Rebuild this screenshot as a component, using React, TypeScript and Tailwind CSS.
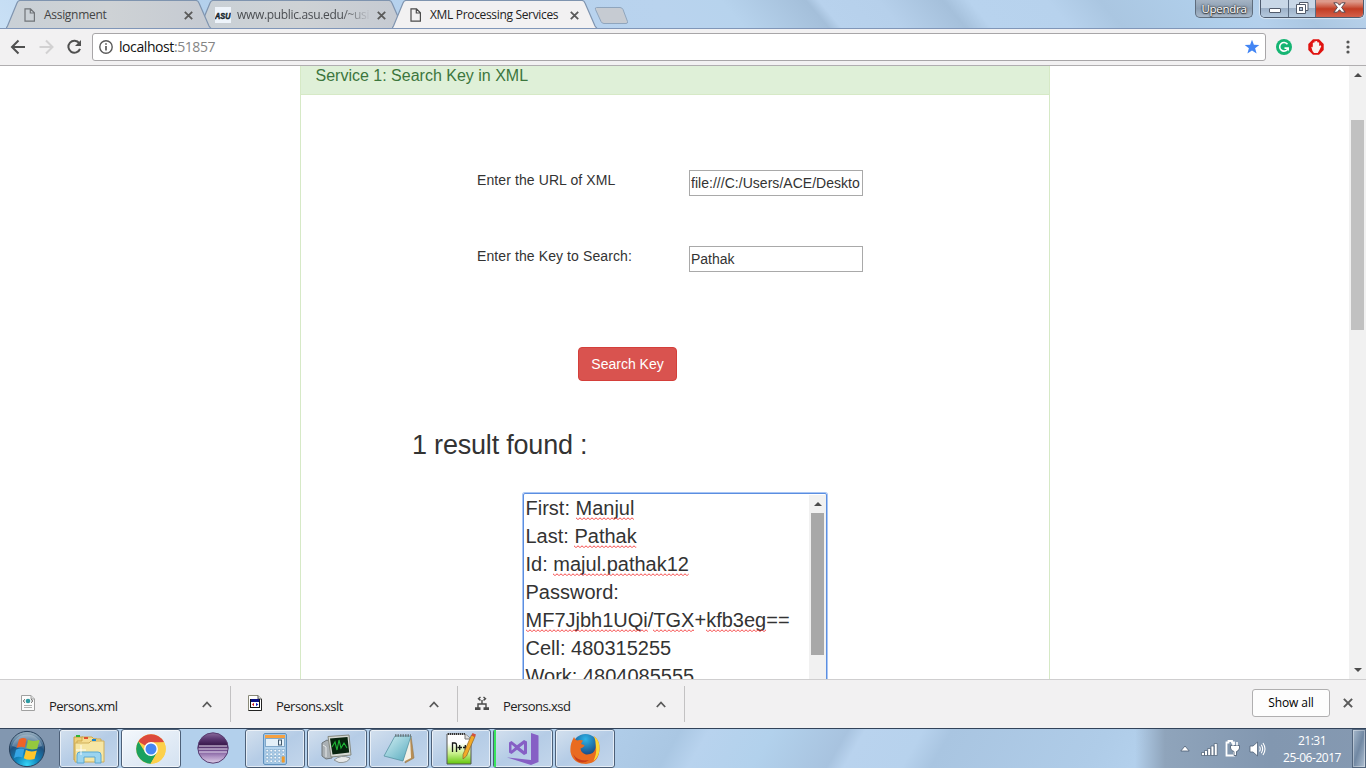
import type { ReactNode } from 'react';

const UI = "font-['Open_Sans','Noto_Sans',sans-serif]";

function TabShape({ active }: { active?: boolean }) {
  return (
    <svg className="absolute inset-0" width="206" height="29" viewBox="0 0 206 29">
      <defs>
        <linearGradient id="tabFill" x1="0" y1="0" x2="1" y2="0">
          <stop offset="0" stopColor="#c9d0d6" />
          <stop offset=".5" stopColor="#ced2d5" />
          <stop offset="1" stopColor="#c5cad2" />
        </linearGradient>
      </defs>
      <path d="M0 28.5 L1.5 26 L11 3 Q12 .5 14 .5 H190 Q192 .5 193 3 L203 26 L205 28.5 Z" fill={active ? '#f2f1f2' : 'url(#tabFill)'} />
      <path d="M0 28.5 L1.5 26 L11 3 Q12 .5 14 .5 H190 Q192 .5 193 3 L203 26 L205 28.5" fill="none" stroke="#7f94af" strokeWidth="1.2" />
      {active && <rect x="1" y="28" width="203" height="1" fill="#f2f1f2" />}
    </svg>
  );
}

function PageIcon({ color }: { color: string }) {
  return (
    <svg width="12" height="14" viewBox="0 0 12 14" fill="none" stroke={color} strokeWidth="1.2">
      <path d="M1 .8 H6.5 L10.4 4.8 V13.2 H1 Z M6.3 1 V5 H10.2" />
    </svg>
  );
}

function Cross({ color = '#5a5a5a', size = 9, w = 1.8 }: { color?: string; size?: number; w?: number }) {
  return (
    <svg width={size} height={size} viewBox="0 0 9 9" stroke={color} strokeWidth={w}>
      <path d="M.8 .8 L8.2 8.2 M8.2 .8 L.8 8.2" />
    </svg>
  );
}

function Tab({ icon, title, active, className = '' }: { icon: ReactNode; title: ReactNode; active?: boolean; className?: string }) {
  return (
    <div className={`relative h-[29px] w-[205px] shrink-0 ${className}`}>
      <TabShape active={active} />
      <div className="relative flex h-[29px] items-center pl-[16px] pr-[18px] pt-[1px]">
        <span className="flex w-[22px] shrink-0 justify-start pl-[2px]">{icon}</span>
        <span className="min-w-0 flex-1 whitespace-nowrap text-[12px] leading-[16px]">{title}</span>
        <span className="ml-[8px] shrink-0"><Cross /></span>
      </div>
    </div>
  );
}

function TitleBar() {
  return (
    <header className="flex h-[29px] items-start overflow-hidden border-b border-[#8096b8] bg-[linear-gradient(50deg,#c9e0f5_0px,#b3d0ec_150px,#b9d3ee_520px,#b7d3ed_570px,#a4bfda_635px,#b8d2ed_645px,#b6d0eb_690px,#a5c0db_740px,#b8d3ee_760px,#b7d2ed_820px,#aac6e1_860px,#b0cfeb_940px,#b4d0ec_970px,#abc7e2_1010px,#bed6ee_1080px)]">
      <Tab
        className="z-10 ml-[6px] text-[#444]"
        icon={<PageIcon color="#707478" />}
        title={<span className="tracking-[-0.3px]">Assignment</span>}
      />
      <Tab
        className="-ml-[12px] text-[#4b4e52]"
        icon={
          <svg className="-ml-[2px]" width="16" height="16" viewBox="0 0 16 16">
            <rect width="16" height="16" fill="#eef4fb" />
            <text x="0" y="11.5" fontSize="9" fontWeight="900" fontStyle="italic" textLength="15.5" lengthAdjust="spacingAndGlyphs" fontFamily="Liberation Sans, sans-serif" fill="#15252b" stroke="#15252b" strokeWidth=".5">ASU</text>
          </svg>
        }
        title={<span className="tracking-[-0.33px] [mask-image:linear-gradient(90deg,#000_105px,transparent_134px)]">www.public.asu.edu/~usi</span>}
      />
      <Tab
        active
        className="z-20 -ml-[12px] text-[#222]"
        icon={<PageIcon color="#4b4b4b" />}
        title={<span className="tracking-[-0.33px]">XML Processing Services</span>}
      />
      <svg className="-ml-[3px] mt-[6px] shrink-0" width="36" height="19" viewBox="0 0 36 19">
        <path d="M2.5 1.5 H26 Q28 1.5 29 3.5 L33.5 15.500 Q34 17.500 32 17.500 H10 Q8 17.500 7 15.500 L1.500 3.500 Q.8 1.500 2.500 1.500 Z" fill="#c6cbd2" stroke="#8fa5bd" />
      </svg>
      <div className="ml-auto flex">
        <div className="mr-[7px] flex h-[18px] w-[58px] items-center justify-center rounded-b-[5px] border border-t-0 border-[#5f6d7d] bg-linear-to-b from-[#a5b4c4] via-[#8c9eb2] to-[#a9b9ca] pt-[1px] text-[11.5px] leading-[14px] tracking-[-0.3px] text-white [text-shadow:0_0_2px_#333,0_0_2px_#333,0_1px_1px_#333]">
          Upendra
        </div>
        <div className="mr-[2px] flex h-[18px] w-[104px] overflow-hidden rounded-b-[5px] border border-t-0 border-[#4e5b6e] shadow-[0_0_1px_1px_rgba(255,255,255,.5)]">
          <div className="flex w-[28px] items-end justify-center border-r border-[#5b6c82] bg-linear-to-b from-[#c8d7e7] from-45% via-[#9db1c8] via-50% to-[#b5c9de] pb-[4px]">
            <svg width="12" height="5"><rect x=".5" y=".5" width="11" height="4" rx=".5" fill="#fff" stroke="#525b6b" /></svg>
          </div>
          <div className="flex w-[27px] items-center justify-center border-r border-[#5b6c82] bg-linear-to-b from-[#c8d7e7] from-45% via-[#9db1c8] via-50% to-[#b5c9de] pb-[2px]">
            <svg width="13" height="12" viewBox="0 0 13 12">
              <path d="M3.500 .5 H12 V8.500 H3.500 Z" fill="#fff" stroke="#525b6b" />
              <path d="M.5 2.500 H9.500 V11.500 H.5 Z" fill="#fff" stroke="#525b6b" />
              <rect x="3.500" y="5.500" width="3" height="3" fill="#b7c9de" stroke="#525b6b" />
            </svg>
          </div>
          <div className="flex flex-1 items-center justify-center bg-linear-to-b from-[#dd9a8b] from-10% via-[#c23c23] via-52% to-[#d4604a] pb-[2px]">
            <svg width="13" height="11" viewBox="0 0 13 11">
              <path d="M.8 .8 H4.300 L6.500 3.200 L8.700 .8 H12.200 L8.600 5.400 L12.200 10.200 H8.700 L6.500 7.700 L4.300 10.200 H.8 L4.400 5.400 Z" fill="#fff" stroke="#58484f" />
            </svg>
          </div>
        </div>
      </div>
    </header>
  );
}

function Toolbar() {
  return (
    <nav className="flex h-[37px] items-center border-b border-[#b0aeb0] bg-[#f2f1f2] pb-[1px] pl-[10px]">
      <svg className="shrink-0" width="74" height="18" viewBox="0 0 74 18" fill="none" strokeWidth="2">
        <path d="M15 9 H2.500 M8.500 2.500 L2 9 L8.500 15.500" stroke="#505050" />
        <path d="M29.500 9 H42 M36 2.500 L42.500 9 L36 15.500" stroke="#d2d1d2" />
        <path d="M69.300 5.300 A6 6 0 1 0 70 10.800" stroke="#505050" />
        <path d="M71 2 V8 H65 Z" fill="#505050" stroke="none" />
      </svg>
      <div className="ml-[8px] flex h-[28px] w-[1174px] shrink-0 items-center rounded-[3px] border border-[#a8a6a8] bg-white pl-[6px] pr-[5px]">
        <svg width="14" height="14" viewBox="0 0 14 14" fill="none" stroke="#5a5a5a" strokeWidth="1.400">
          <circle cx="7" cy="7" r="6.200" />
          <path d="M7 6 V10.500 M7 3.200 V4.800" strokeWidth="1.700" />
        </svg>
        <span className="ml-[6px] text-[14px] leading-[20px] tracking-[-0.42px] text-[#111]">
          localhost<span className="text-[#858585]">:51857</span>
        </span>
        <svg className="ml-auto" width="16" height="16" viewBox="0 0 16 16">
          <path d="M8 .8 L9.900 5.700 L15.300 6 L11.100 9.300 L12.600 14.600 L8 11.600 L3.400 14.600 L4.900 9.300 L.7 6 L6.100 5.700 Z" fill="#4285f4" />
        </svg>
      </div>
      <svg className="ml-[10px]" width="16" height="16" viewBox="0 0 16 16">
        <circle cx="8" cy="8" r="8" fill="#15b573" />
        <path d="M11.500 5.300 A4.300 4.300 0 1 0 11.800 9.800" fill="none" stroke="#fff" strokeWidth="1.600" />
        <path d="M8.500 8.300 H13 V12.500 L11.500 10 H8.500 Z" fill="#fff" />
      </svg>
      <svg className="ml-[16px]" width="16" height="16" viewBox="0 0 16 16">
        <path d="M5 .3 H11 L15.700 5 V11 L11 15.700 H5 L.3 11 V5 Z" fill="#e0120f" />
        <path d="M4.500 12 L3.300 8 L4.500 7.800 L4.800 9 V4 Q5.500 3 6.200 4 L6.500 2.600 Q7.200 1.800 7.800 2.600 L8.100 2.100 Q8.900 1.500 9.300 2.500 L9.500 3.500 Q10.500 2.700 11.200 3.800 V7 L12.500 6.300 L13.300 7.300 L11.500 11 L9.800 14 H6 Z" fill="#f8f1ee" />
      </svg>
      <svg className="ml-[22px]" width="4" height="14" viewBox="0 0 4 14" fill="#555">
        <circle cx="2" cy="2" r="1.600" /><circle cx="2" cy="7" r="1.600" /><circle cx="2" cy="12" r="1.600" />
      </svg>
    </nav>
  );
}

function Misspelt({ id, children }: { id: string; children: ReactNode }) {
  return (
    <span className="relative">
      {children}
      <svg className="absolute -bottom-[1px] left-0 h-[3px] w-full">
        <defs>
          <pattern id={id} width="4" height="3" patternUnits="userSpaceOnUse">
            <path d="M-1 .8 L0 .8 L1.500 2.200 L2.500 2.200 L4 .8 L5 .8" fill="none" stroke="#f54545" strokeWidth="1" />
          </pattern>
        </defs>
        <rect width="100%" height="3" fill={`url(#${id})`} />
      </svg>
    </span>
  );
}

function Arrow({ down }: { down?: boolean }) {
  return (
    <svg width="8" height="4" viewBox="0 0 8 4" fill="#4c4c4c">
      <path d={down ? 'M0 0 H8 L4 4 Z' : 'M0 4 L4 0 L8 4 Z'} />
    </svg>
  );
}

function Page() {
  return (
    <div className="flex h-[613px] overflow-hidden bg-white font-['Liberation_Sans',Arial,sans-serif] text-[14px] text-[#333]">
      <main className="ml-[300px] h-[700px] w-[750px] shrink-0 border-x border-[#d6e9c6]">
        <h3 className="h-[29px] border-b border-[#d6e9c6] bg-[#dff0d8] pl-[14.5px] pt-[1px] text-[16px] leading-[18px] text-[#3c763d]">
          Service 1: Search Key in XML
        </h3>
        <div className="mt-[75px] flex pl-[176px]">
          <label className="w-[212px] leading-[20px] tracking-[0.1px]">Enter the URL of XML</label>
          <div className="h-[26px] w-[174px] overflow-hidden whitespace-nowrap border border-[#a9a9a9] px-[1px] leading-[24px] tracking-[0.03px]">file:///C:/Users/ACE/Deskto</div>
        </div>
        <div className="mt-[50px] flex pl-[176px]">
          <label className="w-[212px] leading-[20px] tracking-[0.1px]">Enter the Key to Search:</label>
          <div className="h-[26px] w-[174px] border border-[#a9a9a9] px-[1px] leading-[24px]">Pathak</div>
        </div>
        <button className="ml-[277px] mt-[75px] block h-[34px] w-[99px] rounded-[4px] border border-[#d43f3a] bg-[#d9534f] text-[14px] leading-[20px] text-white">
          Search Key
        </button>
        <h2 className="ml-[111px] mt-[49px] text-[27px] leading-[30px] tracking-[-0.2px]">1 result found :</h2>
        <div className="ml-[222px] mt-[33px] flex h-[240px] w-[304px] rounded-[2px] border border-[#5b8ee0] shadow-[0_0_0_1px_#a9c6f5]">
          <div className="flex-1 pl-[1.500px] text-[20px] leading-[28px]">
            <p>First: <Misspelt id="s1">Manjul</Misspelt></p>
            <p>Last: <Misspelt id="s2">Pathak</Misspelt></p>
            <p>Id: <Misspelt id="s3">majul.pathak12</Misspelt></p>
            <p>Password:</p>
            <p><Misspelt id="s4">MF7Jjbh1UQi</Misspelt>/<Misspelt id="s5">TGX</Misspelt>+<Misspelt id="s6">kfb3eg</Misspelt>==</p>
            <p>Cell: 480315255</p>
            <p>Work: 4804085555</p>
          </div>
          <div className="mt-[1px] flex w-[17px] flex-col items-center bg-[#f1f1f1] pt-[7px]">
            <Arrow />
            <div className="mt-[7px] h-[142px] w-[13px] bg-[#a8a8a8]" />
          </div>
        </div>
      </main>
      <aside className="ml-auto flex h-full w-[17px] flex-col items-center bg-[#f1f1f1] pt-[7px]">
        <Arrow />
        <div className="mt-[43px] h-[210px] w-[13px] bg-[#c1c1c1]" />
        <div className="mb-[7px] mt-auto flex"><Arrow down /></div>
      </aside>
    </div>
  );
}

function Download({ icon, name }: { icon: ReactNode; name: string }) {
  return (
    <div className="flex h-[36px] w-full items-center border-r border-[#c3c2c3] pr-[18px]">
      <span className="flex w-[28px] shrink-0 pb-[2px]">{icon}</span>
      <span className="pt-[4px] text-[13px] leading-[18px] tracking-[-0.5px] text-[#222]">{name}</span>
      <svg className="ml-auto" width="10" height="7" viewBox="0 0 10 7" fill="none" stroke="#5a5a5a" strokeWidth="1.800"><path d="M.8 6 L5 1.500 L9.200 6" /></svg>
    </div>
  );
}

function Downloads() {
  return (
    <section className="flex h-[49px] items-center border-t border-[#cfcecf] bg-[#f2f1f2] pl-[21px]">
      <div className="flex w-[210px] shrink-0">
        <Download
          name="Persons.xml"
          icon={
            <svg width="14" height="16" viewBox="0 0 14 16">
              <path d="M.5 .5 H10 L13.500 4 V15.500 H.5 Z" fill="#fbfbfb" stroke="#a0a0a0" />
              <path d="M10 .5 V4 H13.500" fill="#ddd" stroke="#a0a0a0" />
              <circle cx="7" cy="6" r="2.300" fill="#2d9ba3" />
              <path d="M4 4.300 L2.200 6 L4 7.700 M10 4.300 L11.800 6 L10 7.700" fill="none" stroke="#555" />
              <path d="M3 10.500 H11 M3 12.500 H11" stroke="#b0b0b0" />
            </svg>
          }
        />
      </div>
      <div className="flex w-[227px] shrink-0 pl-[17px]">
        <Download
          name="Persons.xslt"
          icon={
            <svg width="14" height="16" viewBox="0 0 14 16">
              <path d="M.5 .5 H10 L13.500 4 V15.500 H.5 Z" fill="#fff" stroke="#8a8a78" />
              <path d="M13.500 4 V15.500 H.5" fill="none" stroke="#222" />
              <path d="M10 .5 V4 H13.500" fill="#ddd" stroke="#555" />
              <rect x="2.500" y="4.500" width="9" height="8" fill="#fff" stroke="#111" />
              <rect x="3" y="4" width="8" height="3" fill="#0a1080" />
              <path d="M6 7.800 L4 9.500 L6 11.200 Z" fill="#d21d1d" /><path d="M8 7.800 L10.300 9.500 L8 11.200 Z" fill="#1722c8" />
            </svg>
          }
        />
      </div>
      <div className="flex w-[227px] shrink-0 pl-[17px]">
        <Download
          name="Persons.xsd"
          icon={
            <svg className="mt-[1px]" width="14" height="15" viewBox="0 0 14 15" fill="none" stroke="#4a4a4a" strokeWidth="1.400">
              <path d="M5.500 1 L3.500 2.700 L5.500 4.400 M8.500 1 L10.500 2.700 L8.500 4.400" />
              <path d="M7 4 V8 M3 12 V8 H11 V12" />
              <path d="M0 11.300 H5.500 V14 H0 Z M8.500 11.300 H14 V14 H8.500 Z" fill="#4a4a4a" stroke="none" />
            </svg>
          }
        />
      </div>
      <div className="ml-auto flex items-center pb-[2px] pr-[13px]">
        <div className="flex h-[28px] w-[78px] items-center justify-center rounded-[3px] border border-[#b0afb0] bg-[#fdfdfd] text-[12px] leading-[16px] tracking-[-0.1px] text-black">Show all</div>
        <span className="ml-[13px]"><Cross size={10} w={1.8} /></span>
      </div>
    </section>
  );
}

function TaskButton({ children, bright, green }: { children: ReactNode; bright?: boolean; green?: boolean }) {
  const fill = bright
    ? 'bg-linear-to-br from-[#f4f8fc] via-[#e3ecf6] to-[#d4e2f1]'
    : 'bg-linear-to-br from-[#d3e0ee] via-[#b5cce6] to-[#c3d6eb]';
  return (
    <div className={`relative mr-[2px] flex h-[39px] w-[60px] shrink-0 items-center justify-center rounded-[3px] border border-[#4d6078] shadow-[inset_0_0_0_1px_rgba(255,255,255,.6)] ${fill}`}>
      {green && <span className="absolute left-0 top-0 h-full w-[2px] bg-[#38e35c]" />}
      {children}
    </div>
  );
}

function Taskbar() {
  return (
    <footer className="flex h-[40px] items-start overflow-hidden border-t border-[#32435a] bg-[linear-gradient(90deg,transparent_1135px,#8fa4bb_1165px,#8297b0_1270px,#8599b1_1366px),linear-gradient(120deg,#b3d0ec_0px,#b3d0ec_500px,#aac7e3_590px,#b8d3ee_615px,#b2d1ec_670px,#a8c3df_735px,#b9d3ee_750px,#b7d2ed_800px,#a9c5e1_825px,#afcce8_960px,#b3d0ec_1000px)]">
      <div className="flex h-[39px] w-[59px] shrink-0 items-center justify-center bg-[#8297b0] pr-[5px]">
        <svg width="38" height="38" viewBox="0 0 38 38">
          <defs>
            <radialGradient id="orb" cx=".5" cy=".95" r=".9">
              <stop offset="0" stopColor="#35d5f7" /><stop offset=".35" stopColor="#1186bd" /><stop offset=".7" stopColor="#20527f" /><stop offset="1" stopColor="#8fa8bb" />
            </radialGradient>
          </defs>
          <circle cx="19" cy="19" r="17.600" fill="url(#orb)" stroke="#29415c" />
          <path d="M4 16 A15.500 15.500 0 0 1 34 16 Q19 22 4 16 Z" fill="#fff" opacity=".25" />
          <path d="M11 9.500 Q15 7 18.500 9 L16.800 17.500 Q13 15.800 8.500 18 Z" fill="#ee6328" />
          <path d="M20 9.800 Q24 12 31.500 10 L29.300 18.700 Q23 20.500 18.300 18 Z" fill="#94c83e" />
          <path d="M8 19.800 Q12.500 17.600 16.300 19.300 L14.300 27.500 Q10.500 25.700 6 27.900 Z" fill="#35a5e5" />
          <path d="M17.900 20 Q22.500 22.500 28.800 20.500 L26.500 29 Q20.500 31 15.800 28.200 Z" fill="#ffc62b" />
        </svg>
      </div>
      <TaskButton>
        <svg width="34" height="30" viewBox="0 0 34 30">
          <path d="M2 3 H11 L13 5 H25 V26 H2 Z" fill="#edcf78" stroke="#c79e43" />
          <path d="M10 3 H20 L22 5 H29 V27 H5 V7 H10 Z" fill="#f5dd91" stroke="#cfa94f" />
          <path d="M5 9 H17 L19 7 H32 V28 H3 V9 Z" fill="#f6e6a4" stroke="#cfae58" />
          <path d="M4 2 H8" stroke="#2fb434" strokeWidth="2" /><path d="M12 4 H16" stroke="#dd5031" strokeWidth="2" /><path d="M20 6 H24" stroke="#1b86cf" strokeWidth="2" />
          <path d="M5 29 V21 Q5 18 8 18 H26 Q29 18 29 21 V29 H23 V23 H12 V29 Z" fill="#9bd4ef" stroke="#5ba8d0" />
          <path d="M9 11 V21 M4 16 H14" stroke="#fff" opacity=".9" />
        </svg>
      </TaskButton>
      <TaskButton bright>
        <svg width="30" height="30" viewBox="0 0 30 30">
          <circle cx="15" cy="15" r="14.800" fill="#fcd04b" />
          <path d="M15 15 L2.300 7.500 A14.800 14.800 0 0 1 27.800 7.700 L28 8.200 H15 Z" fill="#dc4a3d" />
          <path d="M2.300 7.400 A14.800 14.800 0 0 0 14.500 29.800 L21 18.500 L15 21 L9 18 Z" fill="#1aa15f" />
          <path d="M14.500 29.800 L21 18.500 L15 15 L10 20 Z" fill="#1aa15f" />
          <path d="M21 18.500 A6.900 6.900 0 0 0 19 9.500 L28 8.200 A14.800 14.800 0 0 1 14.500 29.800 Z" fill="#fcd04b" />
          <circle cx="15" cy="15" r="6.900" fill="#fff" /><circle cx="15" cy="15" r="5.500" fill="#4587f3" />
        </svg>
      </TaskButton>
      <div className="mr-[2px] flex h-[39px] w-[60px] shrink-0 items-center justify-center pb-[2px]">
        <svg width="32" height="32" viewBox="0 0 32 32">
          <defs>
            <linearGradient id="ecl" x1="0" y1="0" x2="0" y2="1">
              <stop offset="0" stopColor="#8a6a9c" /><stop offset=".2" stopColor="#5b3872" /><stop offset=".38" stopColor="#3c1c50" /><stop offset=".6" stopColor="#7b5898" /><stop offset=".8" stopColor="#b297c6" /><stop offset="1" stopColor="#dccfe8" />
            </linearGradient>
          </defs>
          <circle cx="16" cy="16" r="15.200" fill="url(#ecl)" stroke="#573c70" />
          <path d="M2 14 H30 M1.500 17 H30.500 M2 20 H30" stroke="#e6dcef" strokeWidth="1" />
        </svg>
      </div>
      <TaskButton>
        <svg width="24" height="32" viewBox="0 0 24 32">
          <rect x=".7" y=".7" width="22.600" height="30.600" rx="1" fill="#b7d6ef" stroke="#4b82b4" />
          <rect x="2" y="2" width="20" height="3" fill="#f5a142" />
          <rect x="2.500" y="5.500" width="19" height="8" fill="#e4f0f8" stroke="#81a9cb" />
          <rect x="15.500" y="7" width="3" height="5" fill="none" stroke="#40586c" />
          <g fill="#f4f9fd" stroke="#6b99bf" strokeWidth=".5">
            {[17, 20.5, 24, 27.5].map((y) => [3, 7, 11, 15, 19].map((x) => <rect key={`${x}-${y}`} x={x} y={y - 0.5} width="2.600" height="2.400" />))}
          </g>
          <rect x="18.700" y="23.500" width="3" height="6" fill="#f29b28" />
        </svg>
      </TaskButton>
      <TaskButton>
        <svg width="32" height="30" viewBox="0 0 32 30">
          <path d="M1 9 L6 6 L11 9 V24 L5 25 L1 22 Z" fill="#aab0b4" stroke="#6e7579" /><path d="M2 11 L5 13 V23" stroke="#e6e9ea" fill="none" />
          <path d="M7 2.500 L28 1 L30 21 L10 23 Z" fill="#d5d8d2" stroke="#84887f" />
          <path d="M9 4.500 L26.500 3 L28.200 18.500 L11.500 20.500 Z" fill="#07230d" />
          <path d="M11 13 L14 8 L16 16 L18 6 L20 14 L23 9 L26 14" fill="none" stroke="#1fb635" strokeWidth="1.100" />
          <path d="M13 26 Q20 20 29 24 Q27 29 18 28.500 Z" fill="#e6e8e8" stroke="#909697" />
        </svg>
      </TaskButton>
      <TaskButton>
        <svg width="32" height="31" viewBox="0 0 32 31">
          <defs><linearGradient id="note" x1="0" y1="0" x2="1" y2="1"><stop offset="0" stopColor="#d3eff3" /><stop offset="1" stopColor="#54a9bd" /></linearGradient></defs>
          <path d="M28 3 L31 25 L22 30 L27 5 Z" fill="#b98e54" stroke="#94794d" strokeWidth=".6" />
          <path d="M27 3 L28 25 L20 29 Z" fill="#f3f1e6" />
          <path d="M12 3 H28 L20 28 L1 23 Z" fill="url(#note)" stroke="#4c8b9b" strokeWidth=".7" />
          <path d="M12 2.500 H28" stroke="#6c7a80" strokeWidth="2.500" strokeDasharray="1.500 1" />
        </svg>
      </TaskButton>
      <TaskButton>
        <svg width="32" height="33" viewBox="0 0 32 33">
          <defs><linearGradient id="npp" x1="0" y1="0" x2="0" y2="1"><stop offset=".3" stopColor="#fff" /><stop offset=".65" stopColor="#c8f08a" /><stop offset="1" stopColor="#62c60b" /></linearGradient></defs>
          <path d="M2 2 H20 L26 7 V32 H2 Z" fill="url(#npp)" stroke="#555" />
          <path d="M3 2 H20" stroke="#333" strokeWidth="2" strokeDasharray="1 1" /><path d="M20 2 V7 H26" fill="#ddd" stroke="#777" />
          <path d="M7.500 20 V11 H10 Q11.500 11 11.500 13 V20 M12.500 15.500 H17 M14.700 13 V18 M18 15.500 H22.500 M20.300 13 V18" fill="none" stroke="#171717" strokeWidth="1.300" />
          <path d="M26.500 3 L30 4.500 L21.500 24 L18 27 L18 22.500 Z" fill="#f2aa28" stroke="#8b642b" strokeWidth=".7" />
          <path d="M27.500 1 L31 2.500 L30 5 L26.500 3.500 Z" fill="#d2513d" />
        </svg>
      </TaskButton>
      <TaskButton green>
        <svg width="32" height="32" viewBox="0 0 32 32" fill="#865fc5">
          <path d="M24 0 L31.500 2.500 V29 L24 32 L0 24.500 L24 27 Z" />
          <path fillRule="evenodd" d="M2 9.500 L4.500 8 L10 12.300 L17 7 L20 8.500 V20.500 L17 22 L10 16.800 L4.500 21 L2 19.500 Z M4.500 11.500 V17.500 L8 14.500 Z M17 11 L12.500 14.500 L17 18 Z" />
        </svg>
      </TaskButton>
      <TaskButton>
        <svg width="32" height="32" viewBox="0 0 32 32">
          <defs><radialGradient id="ffg" cx=".5" cy=".2" r=".7"><stop offset="0" stopColor="#2eb4e8" /><stop offset="1" stopColor="#143a77" /></radialGradient></defs>
          <circle cx="16.500" cy="14" r="13" fill="url(#ffg)" />
          <path d="M25 3 Q31 8 30.500 16 Q30 30 17 31 Q4 31 1.500 19 Q1 12 3.500 7 L5 4 Q6 7 8 7.500 Q11 6.500 14 7.500 Q12.500 9.500 12 11 Q16 12 15.500 13 Q13 15 11.500 15.500 Q12 20 17 21.500 Q25 22 26.500 15 Q27.500 8 25 3 Z" fill="#e96b20" />
          <path d="M25 3 Q31 8 30.500 16 Q30 24 24.500 28 Q28 20 27 14 Q27 8 25 3 Z" fill="#fbd735" />
          <path d="M4 21 Q9 29 20 27 Q13 32 7 27 Z" fill="#c93d19" />
        </svg>
      </TaskButton>
      <div className="ml-auto flex h-[39px] items-center text-white">
        <svg width="10" height="7" viewBox="0 0 10 7"><path d="M.8 6 L5 1 L9.200 6 Z" fill="#fff" stroke="#4b5d73" strokeWidth=".8" /></svg>
        <svg className="ml-[11px]" width="17" height="14" viewBox="0 0 17 14" fill="#fff" stroke="#4b5d73" strokeWidth=".7">
          <path d="M.5 10.500 H3.500 V13.500 H.5 Z M3.500 8.500 H6.500 V13.500 H3.500 Z M6.700 6.500 H9.700 V13.500 H6.700 Z M10 4 H13 V13.500 H10 Z M13.200 1.500 H16.200 V13.500 H13.200 Z" />
        </svg>
        <svg className="ml-[7px]" width="16" height="17" viewBox="0 0 16 17">
          <path d="M3.500 1 H7 V2.500 H9 V15.500 H1.500 V2.500 H3.500 Z" fill="#8297ae" stroke="#fff" strokeWidth="1.800" />
          <path d="M5.500 5.500 H14.500 V8 Q14 11 11.500 11.500 V15.500 H9 V11.500 Q6 11 5.500 8 Z" fill="#fff" stroke="#47596f" strokeWidth=".8" />
          <path d="M8 2 V5.500 M12 2 V5.500" stroke="#fff" strokeWidth="1.600" />
        </svg>
        <svg className="ml-[8px]" width="17" height="16" viewBox="0 0 17 16">
          <path d="M1 5 H4 L8.500 1 V15 L4 11 H1 Z" fill="#fff" stroke="#506278" strokeWidth=".8" />
          <path d="M10.500 5.500 Q12 8 10.500 10.500 M12.300 3.800 Q15 8 12.300 12.200 M14 2 Q18 8 14 14" fill="none" stroke="#fff" strokeWidth="1.100" />
        </svg>
        <div className="ml-[14px] w-[64px] text-center text-[12px] leading-[17px] tracking-[-0.47px]">
          <div>21:31</div>
          <div className="whitespace-nowrap">25-06-2017</div>
        </div>
        <div className="ml-[8px] h-[39px] w-[14px] border border-[#53667e] bg-linear-to-br from-[#a7b9cc] via-[#7188a3] to-[#b1c1d2] shadow-[inset_0_0_0_1px_rgba(255,255,255,.35)]" />
      </div>
    </footer>
  );
}

export default function App() {
  return (
    <div className={`flex h-[768px] w-[1366px] flex-col overflow-hidden bg-white ${UI}`}>
      <TitleBar />
      <Toolbar />
      <Page />
      <Downloads />
      <Taskbar />
    </div>
  );
}
